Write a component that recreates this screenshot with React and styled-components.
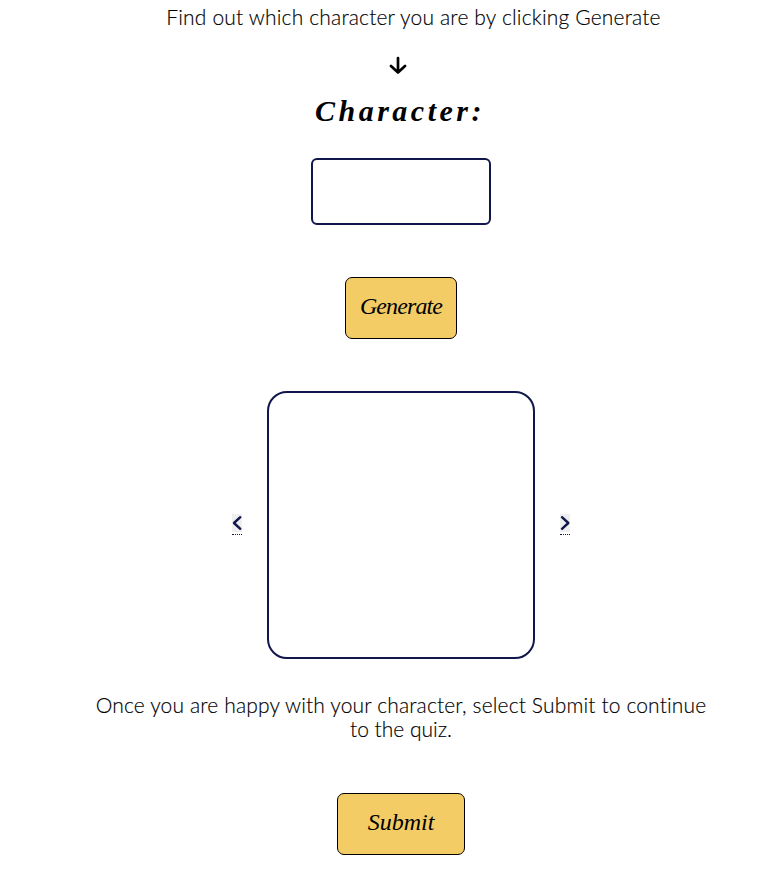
import React from "react";
import styled, { createGlobalStyle } from "styled-components";

const navy = "#11164b";

const GlobalStyle = createGlobalStyle`
  * { box-sizing: border-box; }
  body { margin: 0; background: #fff; }
`;

const Clip = styled.div`
  overflow: hidden;
  width: 100%;
  height: 872px;
`;

const Page = styled.main`
  display: flex;
  flex-direction: column;
  align-items: center;
  width: 802px;
  height: 872px;
  padding-top: 5px;
  color: #000;
  font-family: Lato, sans-serif;
`;

const Text = styled.p`
  margin: 0;
  font-size: 21px;
  font-weight: 300;
  line-height: 24px;
  text-align: center;
  white-space: nowrap;
  -webkit-text-stroke: 0.15px #000;
`;

const Line = styled.span`
  display: block;
  letter-spacing: ${(p) => p.$spacing};
`;

const Intro = styled(Text)`
  padding-left: 25px;
`;

const DownArrow = styled.svg`
  display: block;
  width: 18px;
  height: 18px;
  margin: 27px 6px 0 0;
  fill: none;
  stroke: #000;
  stroke-width: 2.7;
  stroke-linecap: round;
  stroke-linejoin: round;
`;

const Heading = styled.h1`
  height: 44px;
  margin: 15px 0 0;
  padding-right: 2px;
  font: italic 700 30px/44px "Liberation Serif", cursive;
  letter-spacing: 3.5px;
  white-space: nowrap;
`;

const NameField = styled.div`
  width: 180px;
  height: 67px;
  margin-top: 25px;
  border: 2px solid ${navy};
  border-radius: 6px;
`;

const Button = styled.button`
  width: ${(p) => p.$width};
  height: 62px;
  margin-top: 52px;
  padding: 0 0 4px;
  border: 1px solid #000;
  border-radius: 7px;
  background: #f3cc65;
  color: #000;
  font: italic 400 24px/30px "Liberation Serif", cursive;
  letter-spacing: ${(p) => p.$spacing};
`;

const Carousel = styled.div`
  display: flex;
  align-items: center;
  justify-content: center;
  gap: 25px;
  margin-top: 52px;
`;

const Portrait = styled.div`
  width: 268px;
  height: 268px;
  border: 2px solid ${navy};
  border-radius: 20px;
`;

const Step = styled.button`
  width: 10px;
  height: 21px;
  margin-bottom: 2px;
  padding: 0;
  border: 0;
  border-bottom: 1px dotted ${navy};
  background: linear-gradient(#efefef, #efefef) top / 10px 18px no-repeat;
`;

const Chevron = styled.svg`
  display: block;
  width: 10px;
  height: 20px;
  fill: none;
  stroke: ${navy};
  stroke-width: 2.4;
  stroke-linecap: round;
  stroke-linejoin: round;
`;

const Closing = styled(Text)`
  margin-top: 34px;
  margin-bottom: 0;
`;

export default function App() {
  return (
    <Clip>
      <GlobalStyle />
      <Page>
        <Intro>
          <Line $spacing="0.17px">Find out which character you are by clicking Generate</Line>
        </Intro>
        <DownArrow viewBox="0 0 18 18" aria-hidden="true">
          <path d="M9 2V16.5M2 10L9 16.5L16 10" />
        </DownArrow>
        <Heading>Character:</Heading>
        <NameField />
        <Button $width="112px" $spacing="-0.9px">Generate</Button>
        <Carousel>
          <Step aria-label="Previous">
            <Chevron viewBox="0 0 10 20">
              <path d="M8.3 3.2L2 9L8.3 14.8" />
            </Chevron>
          </Step>
          <Portrait />
          <Step aria-label="Next">
            <Chevron viewBox="0 0 10 20">
              <path d="M2 3.2L8.3 9L2 14.8" />
            </Chevron>
          </Step>
        </Carousel>
        <Closing>
          <Line $spacing="0.14px">Once you are happy with your character, select Submit to continue</Line>
          <Line $spacing="0">to the quiz.</Line>
        </Closing>
        <Button $width="128px" $spacing="0">Submit</Button>
      </Page>
    </Clip>
  );
}
